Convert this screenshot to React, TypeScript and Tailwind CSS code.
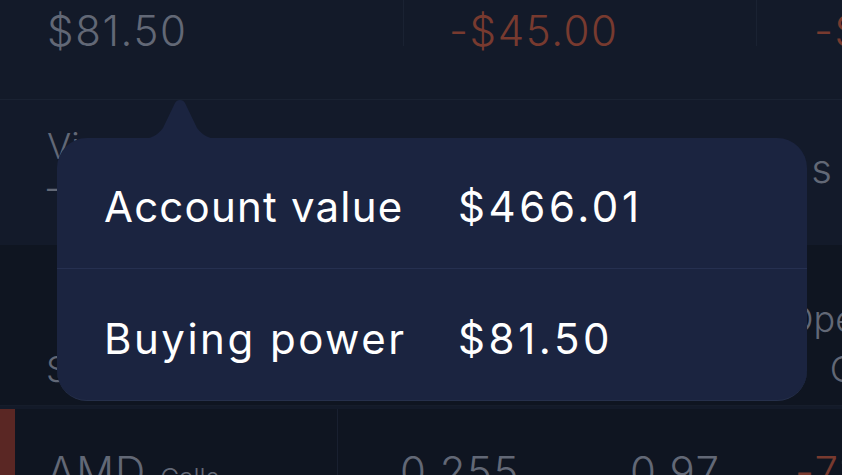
import React from "react";

export default function App() {
  return (
    <div
      className="relative w-[842px] h-[475px] overflow-hidden bg-[#131a29] text-[#626876]"
      style={{ fontFamily: "Inter, 'Liberation Sans', sans-serif" }}
    >
      {/* Row 1 */}
      <div className="flex h-[100px] border-b border-[#1a2232]">
        <div className="w-[404px] shrink-0 h-[46px] border-r border-[#1a2232] pl-[47px] pt-[6px] text-[42px] leading-[50px] font-light tracking-[1.6px]">
          $81.50
        </div>
        <div className="w-[353px] shrink-0 h-[46px] border-r border-[#1a2232] pl-[45px] pt-[6px] text-[42px] leading-[50px] font-light text-[#783a2f] tracking-[1.6px]">
          -$45.00
        </div>
        <div className="flex-1 min-w-0 overflow-hidden h-[46px] pl-[57px] pt-[6px] text-[42px] leading-[50px] font-light text-[#783a2f] whitespace-nowrap tracking-[1.6px]">
          -$
        </div>
      </div>
      {/* Row 2 */}
      <div className="flex h-[145px] bg-[#131a2a]">
        <div className="w-[404px] shrink-0 pl-[47px] pt-[24px] flex flex-col">
          <span className="text-[36px] leading-[44px] font-light">Vi</span>
          <span className="text-[36px] leading-[40px] font-light">–</span>
        </div>
        <div className="flex-1 min-w-0 flex justify-end pr-[10px] pt-[44px]">
          <span className="text-[40px] leading-[50px] font-light">s</span>
        </div>
      </div>
      {/* Row 3 */}
      <div className="flex h-[161px] bg-[#0f1521] border-b border-[#161d2b]">
        <div className="w-[404px] shrink-0 pl-[46px] pt-[102px]">
          <span className="text-[36px] leading-[44px] font-light">S</span>
        </div>
        <div className="flex-1 min-w-0 flex flex-col items-end pt-[52px] overflow-hidden">
          <span className="text-[36px] leading-[44px] font-light whitespace-nowrap -mr-[14px]">Ope</span>
          <span className="text-[36px] leading-[44px] font-light whitespace-nowrap -mr-[14px] mt-[6px]">C</span>
        </div>
      </div>
      {/* Row 4 */}
      <div className="flex h-[70px] mt-[3px] bg-[#0f1521]">
        <div className="w-[15px] shrink-0 bg-[#5a2724]" />
        <div className="w-[323px] shrink-0 border-r border-[#192030] pl-[32px] pt-[38px] flex items-baseline gap-[14px]">
          <span className="text-[42px] leading-[50px] font-light tracking-[1px]">AMD</span>
          <span className="text-[26px] leading-[30px] font-light">Calls</span>
        </div>
        <div className="flex-1 min-w-0 overflow-hidden flex pt-[38px] pl-[62px] whitespace-nowrap">
          <span className="w-[230px] shrink-0 text-[42px] leading-[50px] font-light tracking-[1.5px]">0.255</span>
          <span className="w-[165px] shrink-0 text-[42px] leading-[50px] font-light tracking-[1.5px]">0.97</span>
          <span className="text-[42px] leading-[50px] font-light text-[#783a2f] tracking-[1.5px]">-71</span>
        </div>
      </div>

      {/* Popover */}
      <svg
        className="absolute left-[138px] top-[98px]"
        width="84"
        height="42"
        viewBox="0 0 84 42"
      >
        <path
          d="M0 41 C13 41 19 38 25 30 L37 5 C39 1 45 1 47 5 L59 30 C65 38 71 41 84 41 Z"
          fill="#1b2440"
        />
      </svg>
      <div className="absolute left-[57px] top-[138px] w-[750px] h-[263px] rounded-[30px] bg-[#1b2440] border-b border-[#26304b] flex flex-col text-white">
        <div className="h-[131px] flex items-center border-b border-[#263050] pl-[47px] pt-[8px]">
          <span className="w-[354px] shrink-0 text-[42px] leading-[48px] tracking-[1.2px]">Account value</span>
          <span className="text-[42px] leading-[48px] tracking-[3.6px]">$466.01</span>
        </div>
        <div className="flex-1 flex items-center pl-[47px] pt-[8px]">
          <span className="w-[354px] shrink-0 text-[42px] leading-[48px] tracking-[2.5px]">Buying power</span>
          <span className="text-[42px] leading-[48px] tracking-[3.6px]">$81.50</span>
        </div>
      </div>
    </div>
  );
}
